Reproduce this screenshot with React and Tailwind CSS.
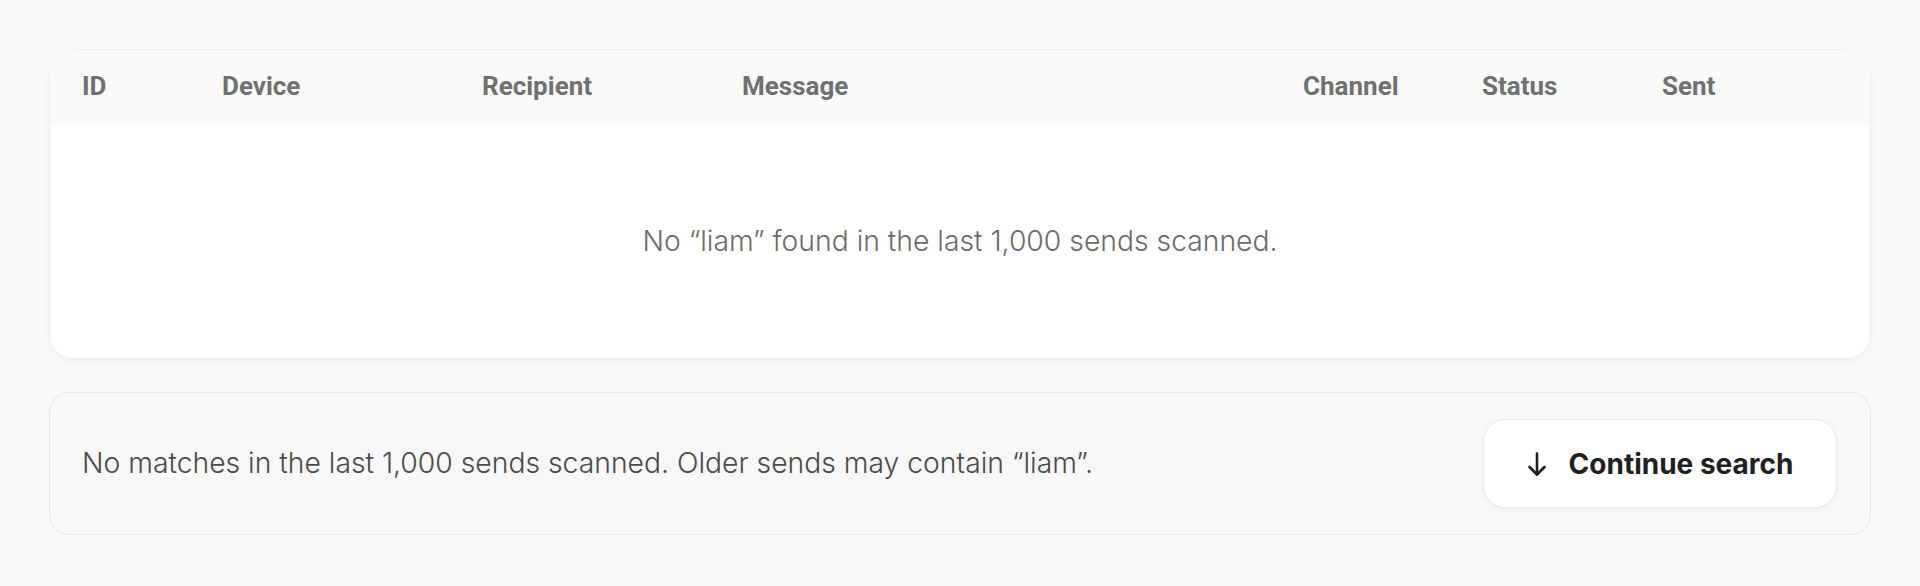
import React from "react";

const cols = ["ID", "Device", "Recipient", "Message", "Channel", "Status", "Sent"];

function ArrowDown() {
  return (
    <svg width="20" height="24" viewBox="0 0 20 24" fill="none" stroke="currentColor" strokeWidth="2.6" strokeLinecap="round" strokeLinejoin="round">
      <path d="M10 1.5v21" />
      <path d="M2.5 15l7.5 7.5 7.5-7.5" />
    </svg>
  );
}

export default function App() {
  return (
    <div className="min-h-[586px] w-full bg-[#f9f9f9] px-[49px] pt-[49px]" style={{ fontFamily: "Inter, 'Noto Sans', sans-serif" }}>
      <div className="mx-[28px] h-px bg-[#ededed]" />
      <div className="mt-[22px] rounded-b-[24px] border border-[#efefef] bg-white shadow-[0_2px_6px_rgba(0,0,0,0.04)]">
        <div
          className="-mt-[23px] grid h-[75px] grid-cols-[140px_260px_260px_561px_179px_180px_1fr] items-center bg-[#fafafa] pb-[2px] pl-[32px] text-[26px] font-bold text-[#707070]"
          style={{ fontFamily: "Roboto, 'Liberation Sans', sans-serif" }}
        >
          {cols.map((c) => (
            <div key={c}>{c}</div>
          ))}
        </div>
        <div className="flex h-[233px] items-center justify-center text-[28.3px] font-light text-[#6b6b6b]">
          No “liam” found in the last 1,000 sends scanned.
        </div>
      </div>
      <div className="mt-[33px] flex h-[143px] items-center justify-between rounded-[20px] border-[1.5px] border-[#e6e6e6] bg-[#f8f8f8] pl-[32px] pr-[33px]">
        <div className="text-[28.3px] font-light text-[#4a4a4a]">
          No matches in the last 1,000 sends scanned. Older sends may contain “liam”.
        </div>
        <button className="flex h-[89px] w-[354px] items-center justify-center gap-[22px] rounded-[22px] border-[1.5px] border-[#e8e8e8] bg-white text-[28px] font-bold text-[#1f1f1f] shadow-[0_2px_4px_rgba(0,0,0,0.05)]">
          <ArrowDown />
          <span>Continue search</span>
        </button>
      </div>
    </div>
  );
}
